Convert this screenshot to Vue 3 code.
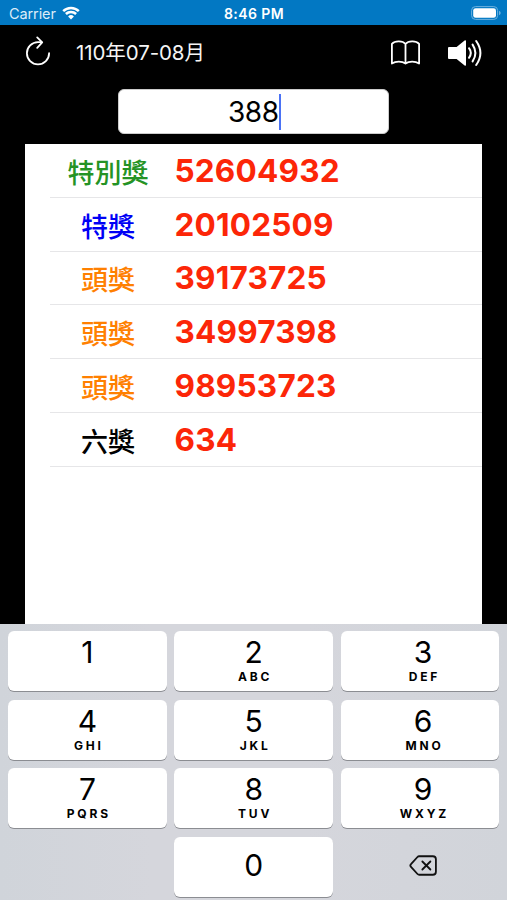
<template>
  <div class="screen">
    <header class="status-bar">
      <div class="carrier">
        <span>Carrier</span>
        <svg class="wifi" viewBox="0 0 18 14">
          <path d="M1.2 5.2a11 11 0 0 1 15.6 0" />
          <path d="M3.9 8a7.2 7.2 0 0 1 10.2 0" />
          <path class="wifi-dot" d="M9 13.4 6.1 10.5a4.1 4.1 0 0 1 5.8 0z" />
        </svg>
      </div>
      <div class="clock">8:46 PM</div>
      <div class="battery">
        <svg viewBox="0 0 30 14">
          <rect class="battery-case" x="0.6" y="0.6" width="26" height="12.8" rx="3.8" />
          <rect class="battery-level" x="2.2" y="2.2" width="22.8" height="9.6" rx="2.4" />
          <path class="battery-tip" d="M28 4.8c2.2 .8 2.2 3.6 0 4.4z" />
        </svg>
      </div>
    </header>

    <nav class="toolbar">
      <svg class="icon refresh" viewBox="0 0 26 32" @click="clearInput">
        <path d="M24.1 18.2A11.1 11.1 0 1 1 13 7.1h3.6" />
        <path d="M12.2 2.4 17.2 7.3 12.2 12.8" />
      </svg>
      <span class="period">{{ period }}</span>
      <svg class="icon book" viewBox="0 0 32 26">
        <path d="M15.5 4C12.8.9 5.2.4 1.9 3.9v19.6c3.7-2.6 10.2-2.6 13.6 0 3.4-2.6 9.9-2.6 13.6 0V3.9C25.8.4 18.2.9 15.5 4zM15.5 4v19.5" />
      </svg>
      <svg class="icon speaker" viewBox="0 0 36 28" @click="muted = !muted">
        <path class="horn" d="M2 8h7.6L17.6 1.4q1.4-.8 1.4 .8v23.6q0 1.6-1.4 .8L9.6 20H2q-1 0-1-1V9q0-1 1-1z" />
        <g v-if="!muted">
          <path d="M22 9.2q3.6 4.8 0 9.6" />
          <path d="M25.6 5.6q5.6 8.4 0 16.8" />
          <path d="M29.2 2q8.4 12 0 24" />
        </g>
      </svg>
    </nav>

    <div class="entry">
      <div class="field">{{ input }}<i class="caret"></i></div>
    </div>

    <main class="prizes">
      <div v-for="prize in prizes" :key="prize.number" class="prize">
        <span class="prize-name" :class="prize.type">{{ prize.name }}</span>
        <span class="prize-number">{{ prize.number }}</span>
      </div>
    </main>

    <section class="keypad">
      <div
        v-for="key in keys"
        :key="key.value"
        class="key"
        :class="{ blank: key.value === 'blank', remove: key.value === 'delete', zero: key.value === '0' }"
        @click="press(key.value)"
      >
        <svg v-if="key.value === 'delete'" class="delete-icon" viewBox="0 0 30 22">
          <path d="M10.5 1.3h14.3a3.2 3.2 0 0 1 3.2 3.2v13a3.2 3.2 0 0 1-3.2 3.2H10.5a2.5 2.5 0 0 1-1.8-.8L1.9 12.4a2 2 0 0 1 0-2.8l6.8-7.5a2.5 2.5 0 0 1 1.8-.8z" />
          <path d="m13.8 6.8 8.4 8.4m0-8.4-8.4 8.4" />
        </svg>
        <template v-else-if="key.value !== 'blank'">
          <span class="digit">{{ key.value }}</span>
          <span v-if="key.letters" class="letters">{{ key.letters }}</span>
        </template>
      </div>
    </section>
  </div>
</template>

<script setup>
import { ref } from 'vue'

const period = '110年07-08月'
const input = ref('388')
const muted = ref(false)

const prizes = [
  { name: '特別獎', number: '52604932', type: 'special' },
  { name: '特獎', number: '20102509', type: 'grand' },
  { name: '頭獎', number: '39173725', type: 'first' },
  { name: '頭獎', number: '34997398', type: 'first' },
  { name: '頭獎', number: '98953723', type: 'first' },
  { name: '六獎', number: '634', type: 'sixth' }
]

const keys = [
  { value: '1' },
  { value: '2', letters: 'ABC' },
  { value: '3', letters: 'DEF' },
  { value: '4', letters: 'GHI' },
  { value: '5', letters: 'JKL' },
  { value: '6', letters: 'MNO' },
  { value: '7', letters: 'PQRS' },
  { value: '8', letters: 'TUV' },
  { value: '9', letters: 'WXYZ' },
  { value: 'blank' },
  { value: '0' },
  { value: 'delete' }
]

const clearInput = () => {
  input.value = ''
}

const press = (value) => {
  if (value === 'blank') return

  if (value === 'delete') {
    input.value = input.value.slice(0, -1)
    return
  }

  // Only the last three digits of a receipt are checked
  input.value = input.value.length >= 3 ? value : input.value + value
}
</script>

<style>
body {
  margin: 0;
  background: #000;
}
</style>

<style scoped>
.screen {
  display: flex;
  flex-direction: column;
  height: 100vh;
  overflow: hidden;
  background: #000;
  font-family: Inter, "Noto Sans CJK TC", sans-serif;
}

svg {
  display: block;
  fill: none;
}

.status-bar {
  flex: none;
  display: grid;
  grid-template-columns: 1fr auto 1fr;
  align-items: center;
  box-sizing: border-box;
  height: 25px;
  padding: 2px 6px 0 9px;
  background: #0278c3;
  color: #fff;
  font-size: 14.5px;
  line-height: 20px;
}

.carrier {
  display: flex;
  align-items: center;
  gap: 6px;
  color: #dcecf8;
  letter-spacing: -0.1px;
}

.wifi {
  width: 18px;
  height: 14px;
  margin-top: -1px;
  stroke: #fff;
  stroke-width: 2.5;
}

.wifi-dot {
  fill: #fff;
  stroke: none;
}

.clock {
  margin-right: 2px;
  font-size: 14px;
  font-weight: 600;
  letter-spacing: 0.4px;
}

.battery {
  justify-self: end;
  margin-top: -1px;
}

.battery svg {
  width: 30px;
  height: 14px;
}

.battery-case {
  stroke: #6db1de;
  stroke-width: 1;
}

.battery-level {
  fill: #fff;
}

.battery-tip {
  fill: #6db1de;
}

.toolbar {
  flex: none;
  display: flex;
  align-items: center;
  box-sizing: border-box;
  height: 64px;
  padding: 0 24px 9px 25px;
}

.icon {
  flex: none;
  stroke: #fff;
  stroke-width: 1.8;
  stroke-linecap: round;
  stroke-linejoin: round;
}

.refresh {
  width: 26px;
  height: 32px;
  margin-bottom: 3px;
}

.period {
  flex: 1;
  margin-left: 25px;
  padding-top: 1px;
  color: #f5f5f5;
  font-size: 20.5px;
  letter-spacing: -0.1px;
  line-height: 28px;
}

.book {
  width: 32px;
  height: 26px;
}

.speaker {
  width: 36px;
  height: 28px;
  margin-left: 25px;
  stroke-width: 2;
}

.horn {
  fill: #fff;
  stroke: none;
}

.entry {
  flex: none;
  display: flex;
  justify-content: center;
  height: 55px;
}

.field {
  display: flex;
  align-items: center;
  justify-content: center;
  box-sizing: border-box;
  width: 271px;
  height: 45px;
  padding-left: 2px;
  border: 1px solid #ccc;
  border-radius: 6px;
  background: #fff;
  color: #000;
  font-size: 28px;
  letter-spacing: -0.5px;
}

.caret {
  width: 2px;
  height: 36px;
  margin-left: 0.5px;
  background: #4a72f5;
}

.prizes {
  flex: 1;
  box-sizing: border-box;
  margin: 0 25px;
  padding-left: 25px;
  background: #fff;
}

.prize {
  display: flex;
  align-items: center;
  box-sizing: border-box;
  height: 53.8px;
  border-bottom: 1px solid #e6e6e8;
}

.prize-name {
  width: 116px;
  padding-top: 7px;
  font-size: 27px;
  font-weight: 500;
  line-height: 40px;
  text-align: center;
}

.special {
  color: #259325;
}

.grand {
  color: #0000f5;
}

.first {
  color: #ff8000;
}

.sixth {
  color: #000;
}

.prize-number {
  margin-left: 8.5px;
  color: #fc2608;
  font-size: 31.5px;
  font-weight: 700;
  letter-spacing: 0.2px;
}

.keypad {
  flex: none;
  display: grid;
  grid-template-columns: repeat(3, 1fr);
  grid-auto-rows: 60px;
  gap: 8.6px 7.5px;
  box-sizing: border-box;
  height: 276px;
  padding: 7px 7.5px 0 8px;
  background: linear-gradient(90deg, #d0d4da, #d5d6dc 30%, #d5d6dc 60%, #d1d4da);
}

.key {
  display: flex;
  flex-direction: column;
  align-items: center;
  box-sizing: border-box;
  padding-top: 3px;
  border-radius: 6px;
  background: #fff;
  box-shadow: 0 1px 0 #8b8d92;
  color: #000;
}

.key:nth-child(3n) {
  padding-left: 6px;
}

.blank,
.remove {
  background: none;
  box-shadow: none;
}

.zero,
.remove {
  justify-content: center;
  padding-top: 0;
  padding-bottom: 3px;
}

.digit {
  font-size: 30px;
  font-weight: 400;
  line-height: 36px;
}

.letters {
  margin-left: 2.8px;
  font-size: 12px;
  font-weight: 700;
  letter-spacing: 2.8px;
  line-height: 14px;
}

.delete-icon {
  width: 29px;
  height: 21px;
  stroke: #111;
  stroke-width: 1.9;
  stroke-linecap: round;
  stroke-linejoin: round;
}
</style>
